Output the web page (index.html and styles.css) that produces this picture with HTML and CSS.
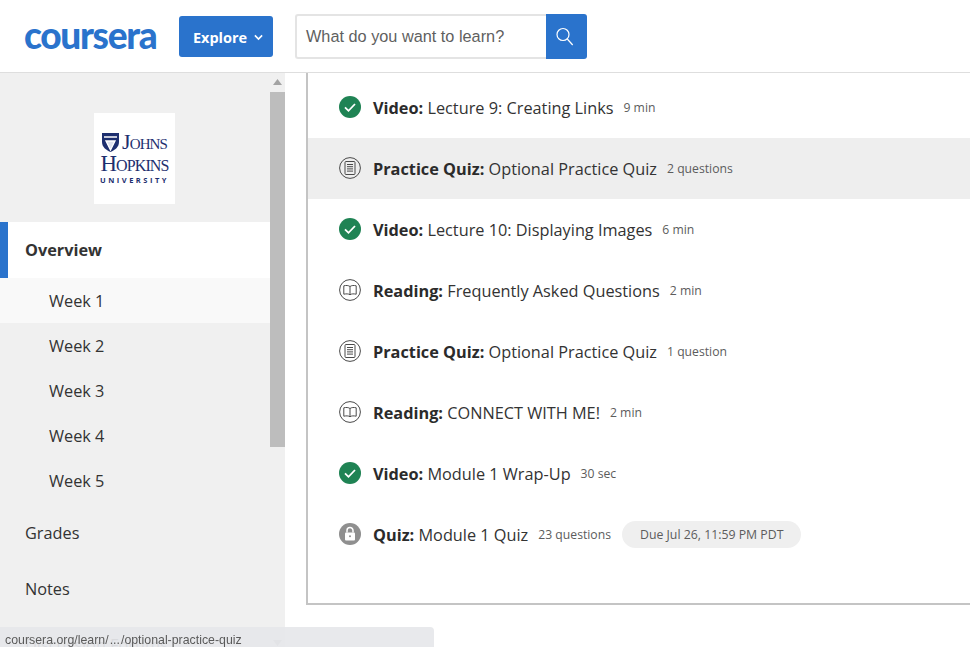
FILE: index.html
```html
<!DOCTYPE html>
<html lang="en">
<head>
<meta charset="utf-8">
<title>Coursera - Week 1</title>
<link rel="stylesheet" href="styles.css">
</head>
<body>
<header class="topbar">
  <a class="logo">coursera</a>
  <button class="explore">Explore
    <svg class="chev" width="9" height="7" viewBox="0 0 10 7"><path d="M1 1.2l4 4 4-4" fill="none" stroke="#fff" stroke-width="1.8"/></svg>
  </button>
  <form class="search">
    <div class="search-input">What do you want to learn?</div>
    <div class="search-btn">
      <svg class="search-ic" width="18" height="19" viewBox="0 0 18 19"><circle cx="7" cy="7.500" r="6" fill="none" stroke="#fff" stroke-width="1.2"/><path d="M11.300 12l5.400 6" stroke="#fff" stroke-width="1.2" fill="none"/></svg>
    </div>
  </form>
</header>
<div class="layout">
  <aside class="sidebar">
    <nav class="side-nav">
      <div class="uni-wrap">
        <div class="uni">
          <div class="uni-top">
            <svg width="17" height="19" viewBox="0 0 17 19"><path d="M0 0h17v9c0 5-4 8-8.500 10C4 17 0 14 0 9z" fill="#1d2f6f"/><path d="M2 4h13M4 8l4.500 9L13 8z" stroke="#fff" stroke-width="1.300" fill="#dfe3ee"/></svg>
            <span class="uni-johns">Johns</span>
          </div>
          <div class="uni-hopkins">Hopkins</div>
          <div class="uni-univ">UNIVERSITY</div>
        </div>
      </div>
      <a class="nav-main active">Overview</a>
      <a class="nav-week current">Week 1</a>
      <a class="nav-week">Week 2</a>
      <a class="nav-week">Week 3</a>
      <a class="nav-week">Week 4</a>
      <a class="nav-week">Week 5</a>
      <a class="nav-main grades">Grades</a>
      <a class="nav-main">Notes</a>
      <a class="nav-main">Discussion Forums</a>
    </nav>
    <div class="scrollbar">
      <svg class="arrow" width="9" height="6" viewBox="0 0 9 6"><path d="M4.500 0L9 6H0z" fill="#a3a3a3"/></svg>
      <div class="thumb"></div>
      <svg class="arrow arrow-down" width="9" height="6" viewBox="0 0 9 6"><path d="M4.500 6L9 0H0z" fill="#a3a3a3"/></svg>
    </div>
  </aside>
  <main class="content">
    <ul class="items">
      <li class="item">
        <svg class="ic" viewBox="0 0 22 22"><use href="#done"/></svg>
        <span class="label"><b>Video:</b> Lecture 9: Creating Links</span><span class="meta">9 min</span>
      </li>
      <li class="item hover">
        <svg class="ic" viewBox="0 0 22 22"><use href="#quiz"/></svg>
        <span class="label"><b>Practice Quiz:</b> Optional Practice Quiz</span><span class="meta">2 questions</span>
      </li>
      <li class="item">
        <svg class="ic" viewBox="0 0 22 22"><use href="#done"/></svg>
        <span class="label"><b>Video:</b> Lecture 10: Displaying Images</span><span class="meta">6 min</span>
      </li>
      <li class="item">
        <svg class="ic" viewBox="0 0 22 22"><use href="#book"/></svg>
        <span class="label"><b>Reading:</b> Frequently Asked Questions</span><span class="meta">2 min</span>
      </li>
      <li class="item">
        <svg class="ic" viewBox="0 0 22 22"><use href="#quiz"/></svg>
        <span class="label"><b>Practice Quiz:</b> Optional Practice Quiz</span><span class="meta">1 question</span>
      </li>
      <li class="item">
        <svg class="ic" viewBox="0 0 22 22"><use href="#book"/></svg>
        <span class="label"><b>Reading:</b> CONNECT WITH ME!</span><span class="meta">2 min</span>
      </li>
      <li class="item">
        <svg class="ic" viewBox="0 0 22 22"><use href="#done"/></svg>
        <span class="label"><b>Video:</b> Module 1 Wrap-Up</span><span class="meta">30 sec</span>
      </li>
      <li class="item">
        <svg class="ic" viewBox="0 0 22 22"><use href="#lock"/></svg>
        <span class="label"><b>Quiz:</b> Module 1 Quiz</span><span class="meta">23 questions</span><span class="due">Due Jul 26, 11:59 PM PDT</span>
      </li>
    </ul>
  </main>
</div>
<div class="status">coursera.org/learn/&hairsp;...&hairsp;/optional-practice-quiz</div>
<svg class="defs" width="0" height="0">
  <defs>
    <g id="done"><circle cx="11" cy="11" r="11" fill="#1f8354"/><path d="M6 11.300l3.500 3.500L16 8" fill="none" stroke="#fff" stroke-width="1.800"/></g>
    <g id="quiz"><circle cx="11" cy="11" r="10.400" fill="none" stroke="#4a4a4a" stroke-width="1"/><rect x="6" y="4.500" width="10" height="13" rx="1" fill="none" stroke="#4a4a4a"/><path d="M8 7.500h6M8 9.700h6M8 11.900h6M8 14.100h6" stroke="#4a4a4a" stroke-width="1"/></g>
    <g id="book"><circle cx="11" cy="11" r="10.400" fill="none" stroke="#4a4a4a" stroke-width="1"/><path d="M11 7.500C9.500 6.300 7 6.300 4.800 6.800v8.400c2.200-.5 4.700-.5 6.200.5 1.500-1 4-1 6.200-.5V6.800C15 6.300 12.500 6.300 11 7.500zv8.200" fill="none" stroke="#4a4a4a"/></g>
    <g id="lock"><circle cx="11" cy="11" r="11" fill="#8f8f8f"/><rect x="6" y="9.500" width="10" height="8" rx="1" fill="#fff"/><path d="M8 9.500V7.500a3 3 0 016 0v2" fill="none" stroke="#fff" stroke-width="1.500"/><circle cx="11" cy="13.300" r="1" fill="#8f8f8f"/></g>
  </defs>
</svg>
</body>
</html>
```
FILE: styles.css
```css
* { box-sizing: border-box; }
html, body { margin: 0; height: 647px; overflow: hidden; }
body {
  display: flex;
  flex-direction: column;
  background: #fff;
  color: #2b2b2b;
  font-family: "Open Sans", "Liberation Sans", sans-serif;
}
.topbar {
  flex: 0 0 73px;
  display: flex;
  align-items: flex-start;
  border-bottom: 1px solid #dedede;
  padding: 14px 0 0 24px;
}
.logo {
  width: 155px;
  font-family: "Lato", "Open Sans", sans-serif;
  font-weight: 900;
  font-size: 37px;
  line-height: 42px;
  letter-spacing: -1.3px;
  color: #2a73cc;
  white-space: nowrap;
}
.explore {
  width: 94px;
  height: 41px;
  margin: 2px 22px 0 0;
  padding: 1px 0 0 4px;
  display: flex;
  align-items: center;
  justify-content: center;
  gap: 7px;
  border: 0;
  border-radius: 3px;
  background: #2a73cc;
  color: #fff;
  font: 700 14.500px "Open Sans", sans-serif;
}
.chev { margin-top: 1px; }
.search { display: flex; height: 45px; }
.search-input {
  width: 251px;
  padding: 0 9px;
  border: 2px solid #e4e4e4;
  border-right: 0;
  border-radius: 3px 0 0 3px;
  font: 16.300px/41px "Liberation Sans", Arial, sans-serif;
  color: #5f5f5f;
}
.search-btn {
  width: 41px;
  display: flex;
  align-items: center;
  justify-content: center;
  background: #2a73cc;
  border-radius: 0 3px 3px 0;
}
.search-ic { margin-right: 4px; }
.layout { flex: 1; display: flex; min-height: 0; }
.sidebar {
  flex: 0 0 285px;
  display: flex;
  background: #f0f0f0;
}
.side-nav { flex: 0 0 270px; display: flex; flex-direction: column; }
.uni-wrap { display: flex; justify-content: center; padding: 40px 1px 18px 0; }
.uni {
  width: 81px;
  height: 91px;
  padding-top: 19px;
  background: #fff;
  color: #1d2f6f;
  font-family: "Liberation Serif", serif;
  display: flex;
  flex-direction: column;
  align-items: center;
}
.uni-top { display: flex; align-items: center; gap: 3px; height: 20px; }
.uni-johns, .uni-hopkins { font-variant: small-caps; font-size: 22px; line-height: 18px; letter-spacing: -0.9px; }
.uni-hopkins { font-size: 22.800px; line-height: 20px; margin-top: 2px; }
.uni-univ { margin-top: 1px; font: 700 7.500px/10px "Open Sans", sans-serif; letter-spacing: 2.500px; }
.nav-main {
  flex: none;
  height: 56px;
  padding-left: 25px;
  display: flex;
  align-items: center;
  font-size: 16.300px;
  color: #333;
}
.nav-main.active {
  background: #fff;
  border-left: 8px solid #2a73cc;
  padding-left: 17px;
  font-weight: 700;
}
.nav-week {
  flex: none;
  height: 45px;
  padding-left: 49px;
  display: flex;
  align-items: center;
  font-size: 16.300px;
  color: #333;
}
.nav-week.current { background: #f9f9f9; }
.grades { margin-top: 2px; }
.scrollbar {
  flex: 0 0 15px;
  display: flex;
  flex-direction: column;
  align-items: center;
  height: 574px;
}
.arrow { flex: none; margin: 6px 0 7px; }
.thumb { flex: 0 0 355px; width: 15px; background: #bdbdbd; }
.arrow-down { margin-top: auto; margin-bottom: 0; position: relative; top: -1px; }
.content { flex: 1; padding-left: 21px; min-width: 0; }
.items {
  list-style: none;
  margin: 0;
  padding: 4px 0 38px;
  border-left: 2px solid #c4c4c4;
  border-bottom: 2px solid #c4c4c4;
  height: 532px;
}
.item {
  height: 61px;
  padding-left: 31px;
  display: flex;
  align-items: center;
}
.item.hover { background: #eee; }
.ic { width: 22px; height: 22px; margin-right: 12px; flex: none; position: relative; top: -1px; }
.label { font-size: 16.300px; color: #333; white-space: nowrap; }
.label b { color: #2b2b2b; }
.meta { margin-left: 10px; font-size: 12.200px; color: #5c5c5c; white-space: nowrap; }
.due {
  margin-left: 11px;
  height: 27px;
  padding: 0 18px;
  border-radius: 14px;
  background: #efefef;
  display: flex;
  align-items: center;
  font-size: 12.300px;
  color: #5c5c5c;
  white-space: nowrap;
}
.status {
  position: fixed;
  left: 0;
  bottom: 0;
  width: 434px;
  height: 20px;
  padding: 4px 0 0 5px;
  background: rgba(230, 231, 235, 0.93);
  border-top-right-radius: 4px;
  font: 12.350px/18px "Liberation Sans", Arial, sans-serif;
  color: #5a5a5a;
}
.defs { position: absolute; }
```
